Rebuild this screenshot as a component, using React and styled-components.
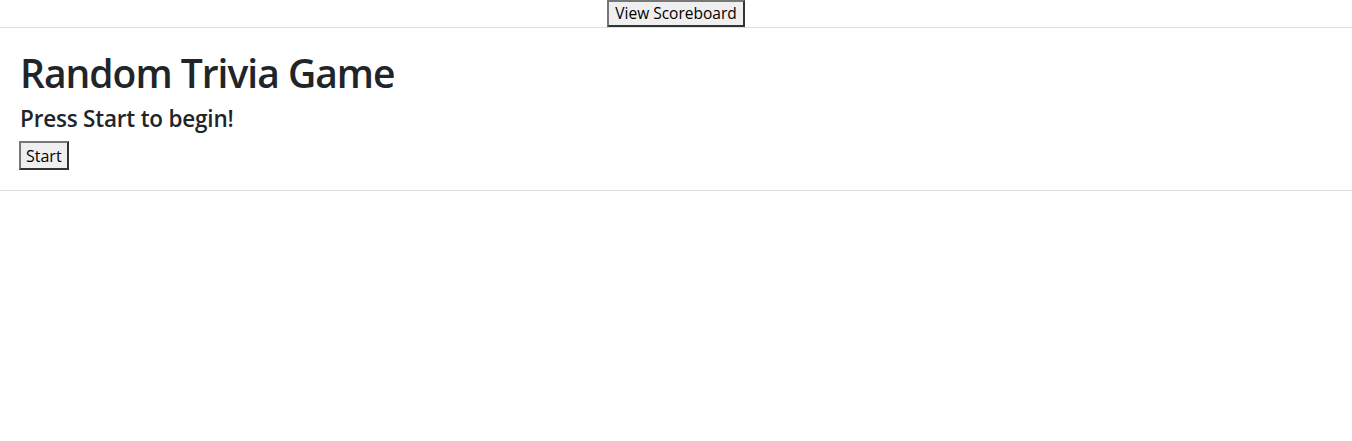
import React from 'react';
import styled, { createGlobalStyle } from 'styled-components';

const GlobalStyle = createGlobalStyle`
    body{
        margin:0;
        background:#fff;
        color:#212529;
        font-family:"Open Sans","Noto Sans",Arial,sans-serif;
    }
`
const TopBar = styled.div`
    display:flex;
    justify-content:center;
    height:27px;
    border-bottom:1px solid #dedede;
`
const PlainButton = styled.button`
    font-family:"Open Sans","Noto Sans",Arial,sans-serif;
    font-size:${props => props.size || 15}px;
    color:#000;
    background:#efefef;
    border:2px solid #333;
    border-top-color:#777;
    border-left-color:#777;
    padding:0 ${props => props.pad || 6}px;
    height:${props => props.h || 28}px;
    line-height:1;
    cursor:pointer;
`
const Game = styled.section`
    display:flex;
    flex-direction:column;
    align-items:flex-start;
    padding:17px 19px 20px;
    border-bottom:1px solid #dedede;
`
const Title = styled.h1`
    margin:0 0 4px 1px;
    font-size:39px;
    font-weight:600;
    letter-spacing:-1px;
    line-height:56px;
`
const Subtitle = styled.h3`
    margin:0 0 8px 1px;
    font-size:22.5px;
    font-weight:600;
    letter-spacing:-0.2px;
    line-height:28px;
`

export default function App() {
    return (
        <>
            <GlobalStyle />
            <TopBar>
                <PlainButton h={27} size={15.5}>View Scoreboard</PlainButton>
            </TopBar>
            <Game>
                <Title>Random Trivia Game</Title>
                <Subtitle>Press Start to begin!</Subtitle>
                <PlainButton h={29} pad={5} size={16}>Start</PlainButton>
            </Game>
        </>
    );
}
